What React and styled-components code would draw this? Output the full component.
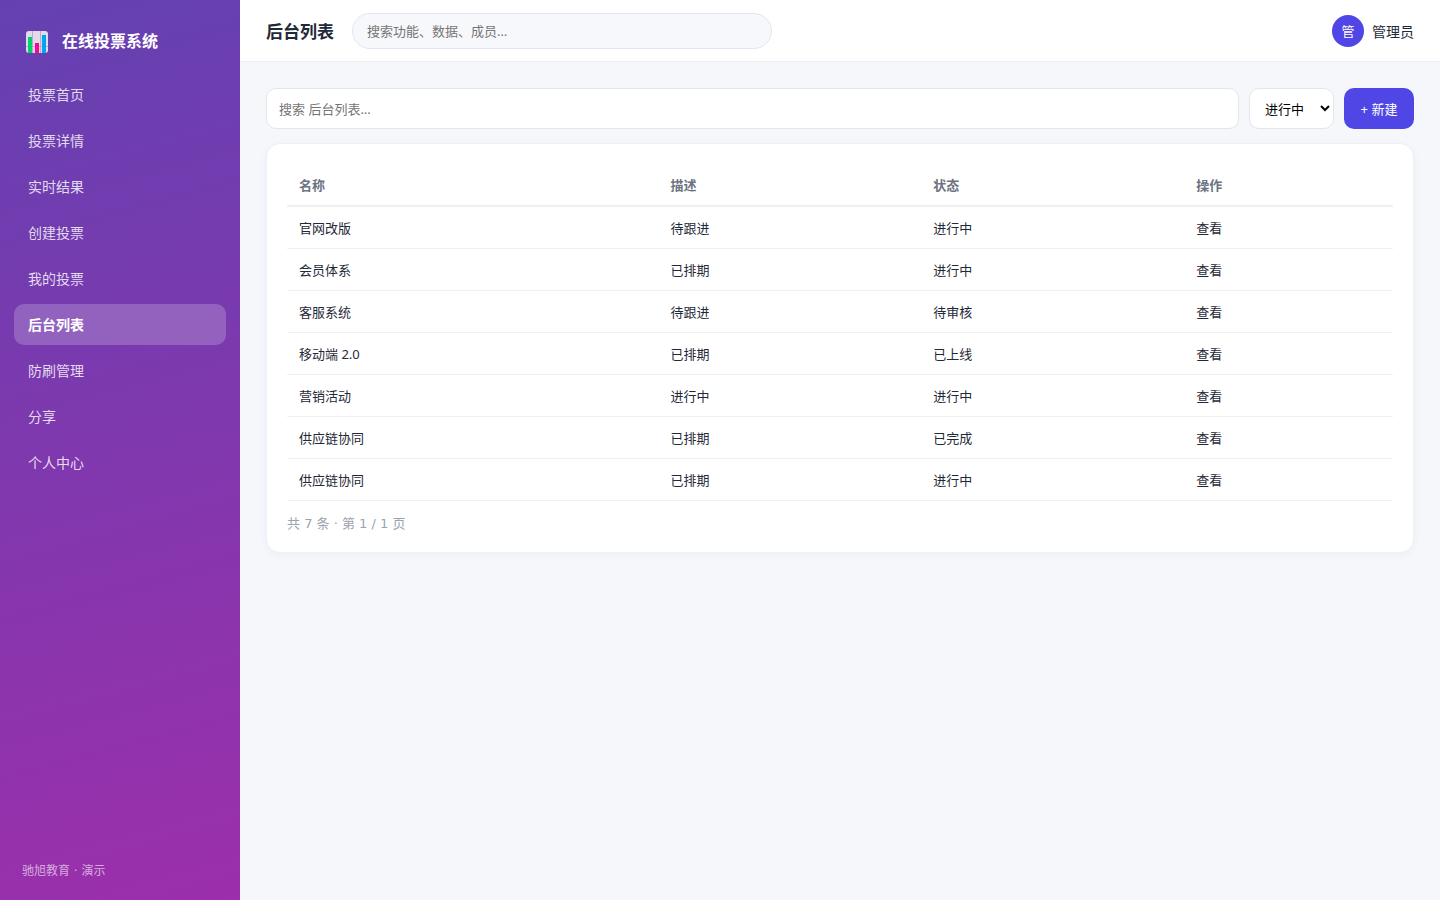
import { useState } from 'react'
import styled, { createGlobalStyle } from 'styled-components'

const GlobalStyle = createGlobalStyle`
  * {
    box-sizing: border-box;
  }
  body {
    margin: 0;
    background: #f5f7fb;
    color: #1f2937;
    font-family: "Noto Sans", "Noto Sans CJK SC", sans-serif;
    font-size: 14px;
  }
  input, select, button {
    font-family: inherit;
    font-size: 13px;
  }
`

const Layout = styled.div`
  display: flex;
  min-height: 100vh;
`
const Sidebar = styled.aside`
  display: flex;
  flex-direction: column;
  flex: 0 0 240px;
  padding: 22px 14px;
  background: linear-gradient(165deg, #6441b1, #9c2fab);
  color: #fff;
`
const Brand = styled.div`
  display: flex;
  align-items: center;
  gap: 14px;
  height: 36px;
  padding: 0 12px;
  margin-bottom: 16px;
  font-size: 16px;
  font-weight: 700;
`
const Nav = styled.nav`
  display: flex;
  flex-direction: column;
  gap: 5px;
`
const NavLink = styled.a`
  padding: 0 14px;
  border-radius: 10px;
  line-height: 41px;
  color: ${({ $active }) => ($active ? '#fff' : 'rgba(255, 255, 255, 0.82)')};
  background: ${({ $active }) => ($active ? 'rgba(255, 255, 255, 0.2)' : 'transparent')};
  font-weight: ${({ $active }) => ($active ? 700 : 400)};
  text-decoration: none;
`
const SidebarFooter = styled.div`
  margin-top: auto;
  padding: 0 8px;
  font-family: "DejaVu Sans", "Noto Sans CJK SC", sans-serif;
  font-size: 12px;
  line-height: 14px;
  color: rgba(255, 255, 255, 0.6);
`

const Main = styled.div`
  flex: 1;
  min-width: 0;
`
const Topbar = styled.header`
  display: flex;
  align-items: center;
  gap: 18px;
  height: 62px;
  padding: 0 26px;
  background: #fff;
  border-bottom: 1px solid #eceef4;
`
const PageTitle = styled.h1`
  margin: 0;
  font-size: 17px;
  font-weight: 700;
`
const GlobalSearch = styled.input`
  flex: 0 1 420px;
  height: 36px;
  padding: 0 14px;
  border: 1px solid #e3e6ef;
  border-radius: 18px;
  background: #f7f8fc;
  outline: none;
`
const User = styled.div`
  display: flex;
  align-items: center;
  gap: 8px;
  margin-left: auto;
`
const Avatar = styled.span`
  width: 32px;
  border-radius: 50%;
  background: #4f46e5;
  color: #fff;
  font-size: 13px;
  line-height: 32px;
  text-align: center;
`

const Content = styled.main`
  padding: 26px;
`
const Toolbar = styled.div`
  display: flex;
  gap: 10px;
  height: 41px;
  margin-bottom: 14px;
`
const SearchInput = styled.input`
  flex: 1;
  min-width: 0;
  padding: 0 12px;
  border: 1px solid #e3e6ef;
  border-radius: 10px;
  background: #fff;
  outline: none;
`
const StatusSelect = styled.select`
  width: 85px;
  padding: 0 0 0 11px;
  border: 1px solid #e3e6ef;
  border-radius: 10px;
  background: #fff;
  color: #000;
`
const CreateButton = styled.button`
  width: 70px;
  padding: 0;
  border: 0;
  border-radius: 10px;
  background: #4f46e5;
  color: #fff;
  cursor: pointer;
`

const Card = styled.section`
  padding: 20px;
  border: 1px solid #eef0f6;
  border-radius: 14px;
  background: #fff;
  box-shadow: 0 2px 8px rgba(30, 40, 90, 0.04);
`
const Table = styled.table`
  width: 100%;
  border-collapse: collapse;
  font-size: 13px;
  line-height: 17px;
`
const Th = styled.th`
  padding: 13px 12px 11px;
  border-bottom: 2px solid #eef0f5;
  color: #6b7280;
  font-weight: 700;
  text-align: left;
`
const Td = styled.td`
  padding: 13px 12px 11px;
  border-bottom: 1px solid #eef0f5;
`
const Pager = styled.div`
  margin-top: 14px;
  font-family: "DejaVu Sans", "Noto Sans CJK SC", sans-serif;
  font-size: 13px;
  line-height: 17px;
  color: #9ca3af;
`

const menu = [
  '投票首页',
  '投票详情',
  '实时结果',
  '创建投票',
  '我的投票',
  '后台列表',
  '防刷管理',
  '分享',
  '个人中心',
]

const columns = ['名称', '描述', '状态', '操作']

const rows = [
  ['官网改版', '待跟进', '进行中'],
  ['会员体系', '已排期', '进行中'],
  ['客服系统', '待跟进', '待审核'],
  ['移动端 2.0', '已排期', '已上线'],
  ['营销活动', '进行中', '进行中'],
  ['供应链协同', '已排期', '已完成'],
  ['供应链协同', '已排期', '进行中'],
]

const ChartLogo = () => (
  <svg width="22" height="26" viewBox="0 -4 22 26" aria-hidden="true">
    <rect width="22" height="22" rx="3" fill="#e2d9ec" />
    <path d="M6.5 0v22M14.5 0v22M0 15.5h22" stroke="#b9adc6" fill="none" />
    <rect x="2" y="6" width="4" height="16" fill="#00d26a" />
    <rect x="9" y="12" width="4" height="10" fill="#f70a8d" />
    <rect x="16" y="4" width="4" height="18" fill="#00a6ed" />
  </svg>
)

const App = () => {
  const [active, setActive] = useState('后台列表')
  const [status, setStatus] = useState('进行中')

  return (
    <Layout>
      <GlobalStyle />
      <Sidebar>
        <Brand>
          <ChartLogo />
          <span>在线投票系统</span>
        </Brand>
        <Nav>
          {menu.map((item) => (
            <NavLink
              key={item}
              href="#"
              $active={item === active}
              onClick={() => setActive(item)}
            >
              {item}
            </NavLink>
          ))}
        </Nav>
        <SidebarFooter>驰旭教育 · 演示</SidebarFooter>
      </Sidebar>
      <Main>
        <Topbar>
          <PageTitle>{active}</PageTitle>
          <GlobalSearch aria-label="全局搜索" placeholder="搜索功能、数据、成员…" />
          <User>
            <Avatar>管</Avatar>
            <span>管理员</span>
          </User>
        </Topbar>
        <Content>
          <Toolbar>
            <SearchInput aria-label="搜索列表" placeholder={`搜索 ${active}...`} />
            <StatusSelect
              aria-label="状态"
              value={status}
              onChange={(e) => setStatus(e.target.value)}
            >
              <option>进行中</option>
              <option>已完成</option>
            </StatusSelect>
            <CreateButton type="button">+ 新建</CreateButton>
          </Toolbar>
          <Card>
            <Table>
              <thead>
                <tr>
                  {columns.map((c) => <Th key={c}>{c}</Th>)}
                </tr>
              </thead>
              <tbody>
                {rows.map(([name, desc, state], i) => (
                  <tr key={i}>
                    <Td>{name}</Td>
                    <Td>{desc}</Td>
                    <Td>{state}</Td>
                    <Td>查看</Td>
                  </tr>
                ))}
              </tbody>
            </Table>
            <Pager>共 {rows.length} 条 · 第 1 / 1 页</Pager>
          </Card>
        </Content>
      </Main>
    </Layout>
  )
}

export default App
